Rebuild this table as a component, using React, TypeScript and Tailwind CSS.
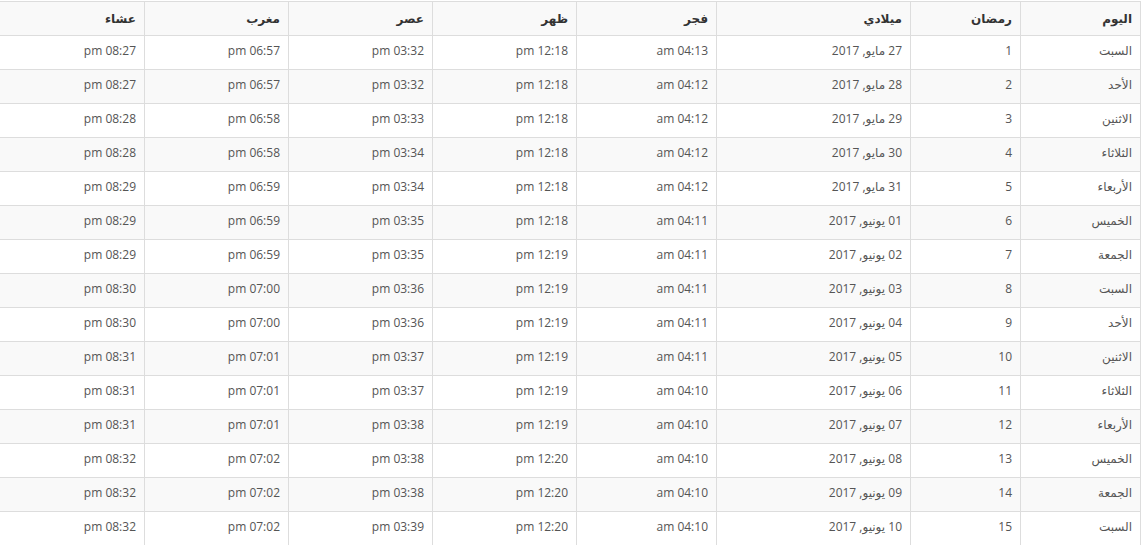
import React from "react";

type Row = {
  day: string;
  ramadan: number;
  date: string;
  fajr: string;
  dhuhr: string;
  asr: string;
  maghrib: string;
  isha: string;
};

const rows: Row[] = [
  { day: "السبت", ramadan: 1, date: "27 مايو, 2017", fajr: "04:13", dhuhr: "12:18", asr: "03:32", maghrib: "06:57", isha: "08:27" },
  { day: "الأحد", ramadan: 2, date: "28 مايو, 2017", fajr: "04:12", dhuhr: "12:18", asr: "03:32", maghrib: "06:57", isha: "08:27" },
  { day: "الاثنين", ramadan: 3, date: "29 مايو, 2017", fajr: "04:12", dhuhr: "12:18", asr: "03:33", maghrib: "06:58", isha: "08:28" },
  { day: "الثلاثاء", ramadan: 4, date: "30 مايو, 2017", fajr: "04:12", dhuhr: "12:18", asr: "03:34", maghrib: "06:58", isha: "08:28" },
  { day: "الأربعاء", ramadan: 5, date: "31 مايو, 2017", fajr: "04:12", dhuhr: "12:18", asr: "03:34", maghrib: "06:59", isha: "08:29" },
  { day: "الخميس", ramadan: 6, date: "01 يونيو, 2017", fajr: "04:11", dhuhr: "12:18", asr: "03:35", maghrib: "06:59", isha: "08:29" },
  { day: "الجمعة", ramadan: 7, date: "02 يونيو, 2017", fajr: "04:11", dhuhr: "12:19", asr: "03:35", maghrib: "06:59", isha: "08:29" },
  { day: "السبت", ramadan: 8, date: "03 يونيو, 2017", fajr: "04:11", dhuhr: "12:19", asr: "03:36", maghrib: "07:00", isha: "08:30" },
  { day: "الأحد", ramadan: 9, date: "04 يونيو, 2017", fajr: "04:11", dhuhr: "12:19", asr: "03:36", maghrib: "07:00", isha: "08:30" },
  { day: "الاثنين", ramadan: 10, date: "05 يونيو, 2017", fajr: "04:11", dhuhr: "12:19", asr: "03:37", maghrib: "07:01", isha: "08:31" },
  { day: "الثلاثاء", ramadan: 11, date: "06 يونيو, 2017", fajr: "04:10", dhuhr: "12:19", asr: "03:37", maghrib: "07:01", isha: "08:31" },
  { day: "الأربعاء", ramadan: 12, date: "07 يونيو, 2017", fajr: "04:10", dhuhr: "12:19", asr: "03:38", maghrib: "07:01", isha: "08:31" },
  { day: "الخميس", ramadan: 13, date: "08 يونيو, 2017", fajr: "04:10", dhuhr: "12:20", asr: "03:38", maghrib: "07:02", isha: "08:32" },
  { day: "الجمعة", ramadan: 14, date: "09 يونيو, 2017", fajr: "04:10", dhuhr: "12:20", asr: "03:38", maghrib: "07:02", isha: "08:32" },
  { day: "السبت", ramadan: 15, date: "10 يونيو, 2017", fajr: "04:10", dhuhr: "12:20", asr: "03:39", maghrib: "07:02", isha: "08:32" },
];

const headers = ["اليوم", "رمضان", "ميلادي", "فجر", "ظهر", "عصر", "مغرب", "عشاء"];

// header is centred in its row, body text sits ~2px above centre
const th = "border border-[#ddd] px-2 text-right text-[12px] font-bold text-[#333] align-middle";
const td = "border border-[#ddd] px-2 pt-0 pb-[4px] text-right text-[#555] align-middle";

const App: React.FC = () => {
  return (
    <div className="w-[1141px] h-[545px] overflow-hidden bg-white pt-px font-['Open_Sans','DejaVu_Sans',sans-serif] text-[12px]">
      <table dir="rtl" className="table-fixed border-collapse w-[1142px] ml-[-1px]">
        <colgroup>
          <col className="w-[120px]" />
          <col className="w-[110px]" />
          <col className="w-[194px]" />
          <col className="w-[140px]" />
          <col className="w-[144px]" />
          <col className="w-[144px]" />
          <col className="w-[144px]" />
          <col className="w-[145px]" />
        </colgroup>
        <thead>
          <tr className="h-[34px] bg-[#f9f9f9]">
            {headers.map((h) => (
              <th key={h} className={th}>
                {h}
              </th>
            ))}
          </tr>
        </thead>
        <tbody>
          {rows.map((r, i) => (
            <tr key={r.ramadan} className={i % 2 === 1 ? "h-[34px] bg-[#f9f9f9]" : "h-[34px] bg-white"}>
              <td className={td}>{r.day}</td>
              <td className={td}>{r.ramadan}</td>
              <td className={td}>{r.date}</td>
              <td className={td}>{r.fajr} am</td>
              <td className={td}>{r.dhuhr} pm</td>
              <td className={td}>{r.asr} pm</td>
              <td className={td}>{r.maghrib} pm</td>
              <td className={td}>{r.isha} pm</td>
            </tr>
          ))}
        </tbody>
      </table>
    </div>
  );
};

export default App;
